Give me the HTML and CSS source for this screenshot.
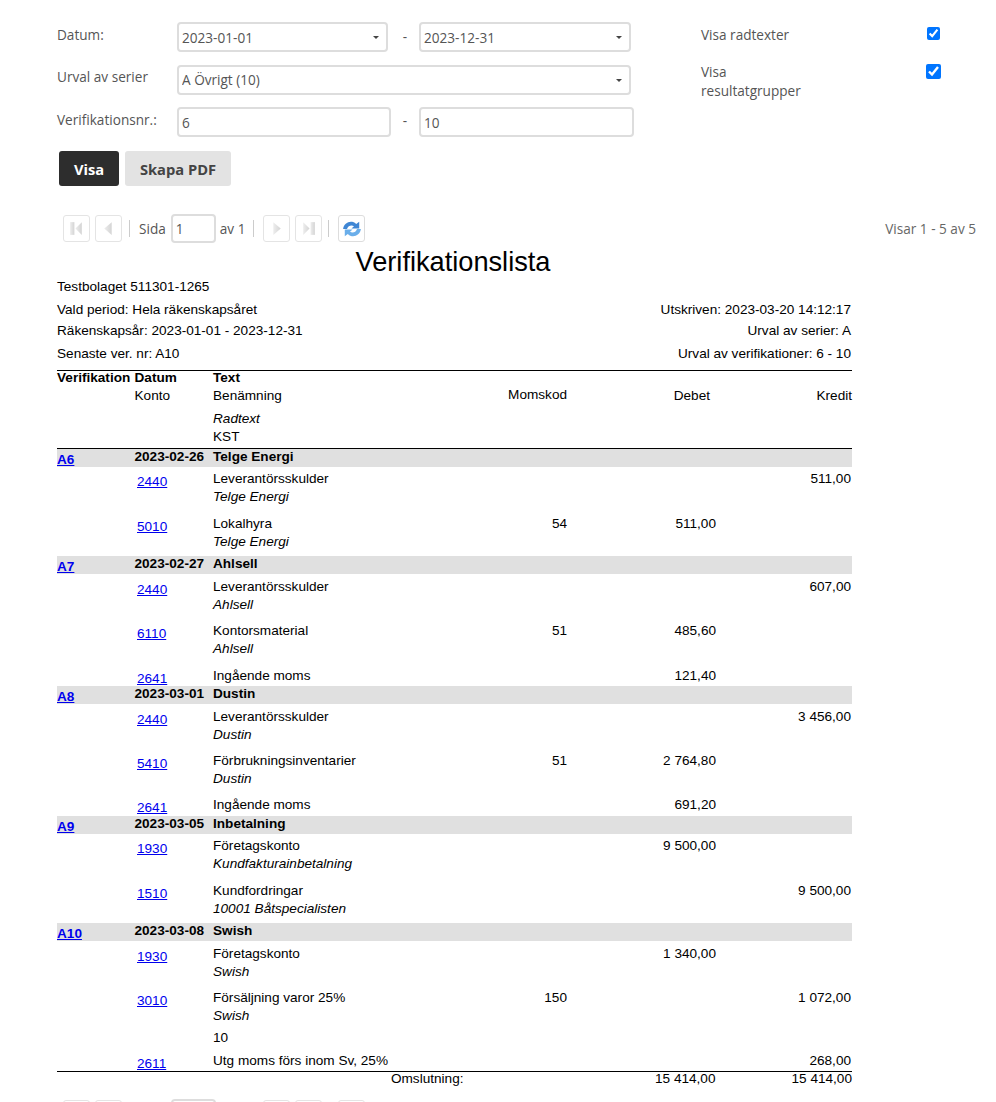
FILE: index.html
```html
<!DOCTYPE html>
<html lang="sv">
<head>
<meta charset="utf-8">
<title>Verifikationslista</title>
<link rel="stylesheet" href="styles.css">
</head>
<body>
<svg class="defs" width="0" height="0" aria-hidden="true">
  <defs>
    <linearGradient id="g" x1="0" y1="0" x2="1" y2="0"><stop offset="0" stop-color="#ededed"/><stop offset="1" stop-color="#d4d4d4"/></linearGradient>
    <symbol id="first" viewBox="0 0 16 16"><rect x="2" y="2" width="4" height="12" fill="url(#g)"/><path d="M13 2v12L7 8z" fill="url(#g)"/></symbol>
    <symbol id="prev" viewBox="0 0 16 16"><path d="M11 2v12L4 8z" fill="url(#g)"/></symbol>
    <symbol id="next" viewBox="0 0 16 16"><path d="M5 2v12l7-6z" fill="url(#g)"/></symbol>
    <symbol id="last" viewBox="0 0 16 16"><path d="M3 2v12l6-6z" fill="url(#g)"/><rect x="10" y="2" width="4" height="12" fill="url(#g)"/></symbol>
    <symbol id="refresh" viewBox="0 0 18 18">
      <path d="M1 9C1.500 4.500 6 1.500 10 2.800 11 3.100 12 3.700 12.800 4.500L15.500 2.500V8.500H8.500L10.800 6.500C9 5.300 5.500 5.500 4.500 9Z" fill="#3f86d4"/>
      <path d="M17 9C16.500 13.500 12 16.500 8 15.200 7 14.900 6 14.300 5.200 13.500L2.500 15.500V9.500H9.500L7.200 11.500C9 12.700 12.500 12.500 13.500 9Z" fill="#6aaeea"/>
    </symbol>
  </defs>
</svg>

<form class="filters">
  <div class="filter-left">
    <div class="frow r1">
      <label class="flabel">Datum:</label>
      <span class="sel"><select><option>2023-01-01</option></select></span>
      <span class="dash">-</span>
      <span class="sel s2"><select><option>2023-12-31</option></select></span>
    </div>
    <div class="frow r2">
      <label class="flabel">Urval av serier</label>
      <span class="sel wide"><select><option>A Övrigt (10)</option></select></span>
    </div>
    <div class="frow r3">
      <label class="flabel">Verifikationsnr.:</label>
      <input class="num" type="text" value="6">
      <span class="dash">-</span>
      <input class="num" type="text" value="10">
    </div>
    <div class="btns">
      <button type="button" class="btn dark">Visa</button>
      <button type="button" class="btn light">Skapa PDF</button>
    </div>
  </div>
  <div class="filter-right">
    <div class="opt o1"><label>Visa radtexter</label><input type="checkbox" checked></div>
    <div class="opt o2"><label>Visa<br>resultatgrupper</label><input class="big" type="checkbox" checked></div>
  </div>
</form>

<div class="pager">
  <span class="pbtn"><svg><use href="#first"/></svg></span>
  <span class="pbtn"><svg><use href="#prev"/></svg></span>
  <span class="sep"></span>
  <span class="ptext">Sida</span>
  <input class="pinput" type="text" value="1">
  <span class="ptext">av 1</span>
  <span class="sep wide-sep"></span>
  <span class="pbtn"><svg><use href="#next"/></svg></span>
  <span class="pbtn"><svg><use href="#last"/></svg></span>
  <span class="sep tight-sep"></span>
  <span class="pbtn active"><svg><use href="#refresh"/></svg></span>
  <span class="pinfo">Visar 1 - 5 av 5</span>
</div>

<main class="report">
  <h1 class="title">Verifikationslista</h1>
  <div class="company">Testbolaget 511301-1265</div>
  <div class="meta m1"><span>Vald period: Hela räkenskapsåret</span><span>Utskriven: 2023-03-20 14:12:17</span></div>
  <div class="meta m2"><span>Räkenskapsår: 2023-01-01 - 2023-12-31</span><span>Urval av serier: A</span></div>
  <div class="meta m3"><span>Senaste ver. nr: A10</span><span>Urval av verifikationer: 6 - 10</span></div>

  <div class="thead">
    <div class="grid th1"><b>Verifikation</b><b>Datum</b><b>Text</b></div>
    <div class="grid th2"><span></span><span>Konto</span><span>Benämning</span><span class="rt up">Momskod</span><span class="rt dh">Debet</span><span class="rt kh">Kredit</span></div>
    <div class="grid th3"><span></span><span></span><i>Radtext</i></div>
    <div class="grid th4"><span></span><span></span><span>KST</span></div>
  </div>

  <div class="grid vhead"><a class="vlink" href="#">A6</a><b>2023-02-26</b><b>Telge Energi</b></div>
  <div class="grid row hi"><a class="acc" href="#">2440</a><div class="tx">Leverantörsskulder<i>Telge Energi</i></div><span></span><span></span><span class="rt">511,00</span></div>
  <div class="grid row"><a class="acc" href="#">5010</a><div class="tx">Lokalhyra<i>Telge Energi</i></div><span class="rt">54</span><span class="rt">511,00</span><span></span></div>

  <div class="grid vhead"><a class="vlink" href="#">A7</a><b>2023-02-27</b><b>Ahlsell</b></div>
  <div class="grid row lo"><a class="acc" href="#">2440</a><div class="tx">Leverantörsskulder<i>Ahlsell</i></div><span></span><span></span><span class="rt">607,00</span></div>
  <div class="grid row"><a class="acc" href="#">6110</a><div class="tx">Kontorsmaterial<i>Ahlsell</i></div><span class="rt">51</span><span class="rt">485,60</span><span></span></div>
  <div class="grid row short lo"><a class="acc" href="#">2641</a><div class="tx">Ingående moms</div><span></span><span class="rt">121,40</span><span></span></div>

  <div class="grid vhead"><a class="vlink" href="#">A8</a><b>2023-03-01</b><b>Dustin</b></div>
  <div class="grid row lo"><a class="acc" href="#">2440</a><div class="tx">Leverantörsskulder<i>Dustin</i></div><span></span><span></span><span class="rt">3 456,00</span></div>
  <div class="grid row"><a class="acc" href="#">5410</a><div class="tx">Förbrukningsinventarier<i>Dustin</i></div><span class="rt">51</span><span class="rt">2 764,80</span><span></span></div>
  <div class="grid row short"><a class="acc" href="#">2641</a><div class="tx">Ingående moms</div><span></span><span class="rt">691,20</span><span></span></div>

  <div class="grid vhead"><a class="vlink" href="#">A9</a><b>2023-03-05</b><b>Inbetalning</b></div>
  <div class="grid row"><a class="acc" href="#">1930</a><div class="tx">Företagskonto<i>Kundfakturainbetalning</i></div><span></span><span class="rt">9 500,00</span><span></span></div>
  <div class="grid row"><a class="acc" href="#">1510</a><div class="tx">Kundfordringar<i>10001 Båtspecialisten</i></div><span></span><span></span><span class="rt">9 500,00</span></div>

  <div class="grid vhead"><a class="vlink" href="#">A10</a><b>2023-03-08</b><b>Swish</b></div>
  <div class="grid row lo"><a class="acc" href="#">1930</a><div class="tx">Företagskonto<i>Swish</i></div><span></span><span class="rt">1 340,00</span><span></span></div>
  <div class="grid row tall lo"><a class="acc" href="#">3010</a><div class="tx">Försäljning varor 25%<i>Swish</i><span class="kst">10</span></div><span class="rt">150</span><span></span><span class="rt">1 072,00</span></div>
  <div class="grid row last"><a class="acc" href="#">2611</a><div class="tx">Utg moms förs inom Sv, 25%</div><span></span><span></span><span class="rt">268,00</span></div>

  <div class="grid total"><span></span><span class="rt">Omslutning:</span><span class="rt">15 414,00</span><span class="rt">15 414,00</span></div>
</main>

<div class="pager bottom">
  <span class="pbtn"></span><span class="pbtn"></span><span class="sep"></span><span class="pgap sida-gap"></span>
  <input class="pinput" type="text"><span class="pgap av-gap"></span><span class="sep wide-sep"></span>
  <span class="pbtn"></span><span class="pbtn"></span><span class="sep tight-sep"></span><span class="pbtn"></span>
</div>
</body>
</html>
```

FILE: styles.css
```css
* { box-sizing: border-box; }
html { height: 1102px; overflow: hidden; }
body { margin: 0; height: 1102px; overflow: hidden; background: #fff; font-family: "Liberation Sans", Arial, sans-serif; font-size: 13.6px; color: #000; }
.defs { position: absolute; }

.filters { display: flex; padding: 22px 0 0 57px; height: 214px; font-family: "Open Sans", sans-serif; font-size: 13.6px; color: #555; }
.filter-left { width: 577px; }
.frow { display: flex; align-items: flex-start; height: 30px; }
.r2 { margin-top: 13px; }
.r3 { margin-top: 12px; }
.flabel { width: 120px; line-height: 20px; color: #555; padding-top: 3px; }
.r2 .flabel { padding-top: 2px; }
.sel { position: relative; display: block; width: 211px; height: 30px; }
.sel.s2 { width: 212px; }
.sel.wide { width: 454px; }
.sel.wide select { padding-bottom: 2px; }
.sel::after { content: ""; position: absolute; right: 9px; top: 14px; border: 3px solid transparent; border-top: 3px solid #444; border-bottom: 0; }
select, .num, .pinput { font: inherit; color: #555; background: #fff; border: 2px solid #ddd; border-radius: 4px; outline: 0; }
select { appearance: none; width: 100%; height: 30px; padding: 0 3px; }
.dash { width: 31px; text-align: center; line-height: 20px; padding: 5px 0 0 3px; }
.num { width: 214px; height: 30px; padding: 0 3px; }
.r3 .dash { width: 28px; padding: 4px 0 0; }
.r3 .num:last-child { width: 215px; }
.btns { display: flex; gap: 6px; margin: 14px 0 0 2px; }
.btn { font: 700 14.7px "Open Sans", sans-serif; height: 35px; border: 0; border-radius: 3px; padding: 0; }
.dark { width: 60px; background: #2d2d2d; color: #fff; }
.light { width: 106px; background: #e3e3e3; color: #444; }

.filter-right { margin-left: 67px; width: 239px; }
.opt { display: flex; justify-content: space-between; align-items: flex-start; line-height: 19px; }
.opt label { width: 110px; color: #555; }
.o1 { padding-top: 3px; height: 40px; }
.o1 input { margin: 2px 0 0 0; width: 13px; height: 13px; }
.opt .big { margin: 2px -1px 0 0; width: 15px; height: 15px; }

.pager { display: flex; align-items: center; height: 29px; margin: 0 20px 0 63px; font-family: "Open Sans", sans-serif; font-size: 13.6px; color: #555; }
.pbtn { width: 27px; height: 27px; border: 1px solid #e4e4e4; border-radius: 3px; margin-right: 5px; display: flex; align-items: center; justify-content: center; flex: none; }
.pbtn svg { width: 17px; height: 17px; }
.pbtn.active { border-color: #ddd; }
.pbtn.active svg { width: 20px; height: 20px; }
.sep { width: 1px; height: 17px; background: #ccc; margin: 0 9px 0 2px; flex: none; }
.wide-sep { margin-left: 8px; }
.tight-sep { margin-left: 1px; }
.ptext { flex: none; }
.pgap { flex: none; }
.sida-gap { width: 27px; }
.av-gap { width: 25px; }
.pinput { width: 45px; height: 29px; margin: 0 4px 0 5px; padding: 0 3px; flex: none; }
.pinfo { margin-left: auto; color: #666; }

.report { margin: 3px 0 0 57px; width: 795px; }
.title { margin: 0 3px 0 0; font-weight: 400; font-size: 27.2px; line-height: 32px; text-align: center; height: 32px; }
.company { line-height: 18px; }
.meta { display: flex; justify-content: space-between; line-height: 18px; padding-right: 1px; }
.m1 { margin-top: 5px; }
.m2 { margin-top: 3px; }
.m3 { margin-top: 5px; }

.grid { display: grid; grid-template-columns: 77.5px 78.5px 257px 97px 149px 136px; line-height: 18px; }
.thead { margin-top: 7px; border-top: 1px solid #000; border-bottom: 1px solid #000; height: 79px; }
.grid.th3 { margin-top: 5px; }
.rt { text-align: right; }
.up { margin-top: -1px; }
.dh { padding-right: 6px; }
.th1 { height: 16px; line-height: 14px; }

.vhead { height: 18px; line-height: 16px; background: #e0e0e0; }
.vlink { font-weight: 700; padding-top: 2px; color: #00e; line-height: 18px; }
.row { grid-template-columns: 156px 257px 97px 149px 136px; padding: 3.500px 0 0 0; height: 44.4px; }
.row.hi { padding-top: 2.500px; }
.row.lo { padding-top: 4.500px; }
.row .acc { margin: 3px 0 0 80px; color: #00e; justify-self: start; }
.row .rt:last-child { padding-right: 1px; }
.tx i { display: block; }
.short { height: 23.2px; }
.tall { height: 63.6px; }
.last { height: 22.4px; }
.kst { display: block; margin-top: 4px; }
.total { border-top: 1px solid #000; grid-template-columns: 250px 156.500px 252px 136.500px; line-height: 13px; }

.bottom { margin-top: 14px; }
```
